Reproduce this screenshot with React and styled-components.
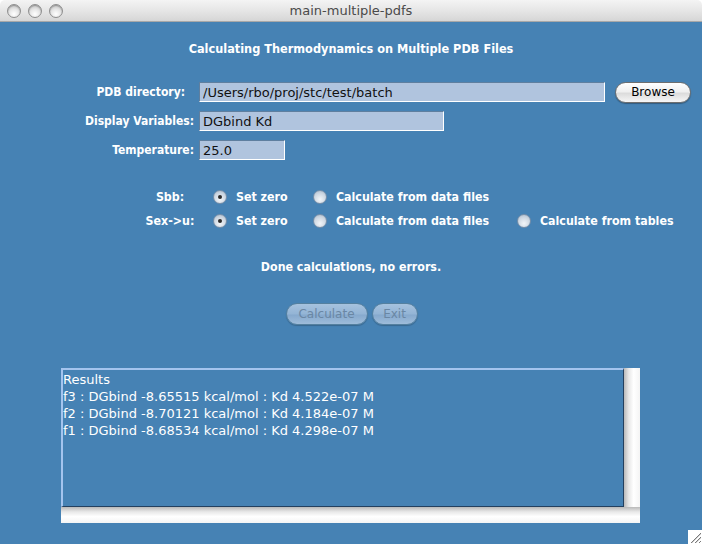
import styled, { createGlobalStyle } from "styled-components";

const GlobalStyle = createGlobalStyle`
  html, body {
    margin: 0;
    padding: 0;
    background: #ffffff;
  }
  * {
    box-sizing: border-box;
  }
`;

const FONT = `"DejaVu Sans", "Lucida Grande", Verdana, sans-serif`;
const BOLD_FONT = `"DejaVu Sans Condensed", "DejaVu Sans", Verdana, sans-serif`;

const App = () => {
  return (
    <Window>
      <GlobalStyle />
      <TitleBar>
        <Lights>
          <Light />
          <Light />
          <Light />
        </Lights>
        <TitleText>main-multiple-pdfs</TitleText>
      </TitleBar>
      <Content>
        <Heading>Calculating Thermodynamics on Multiple PDB Files</Heading>

        <Form>
          <FormRow>
            <Label pad={9}>PDB directory:</Label>
            <Field width={406} defaultValue="/Users/rbo/proj/stc/test/batch" />
            <AquaButton>Browse</AquaButton>
          </FormRow>
          <FormRow>
            <Label>Display Variables:</Label>
            <Field width={245} defaultValue="DGbind Kd" />
          </FormRow>
          <FormRow>
            <Label>Temperature:</Label>
            <Field width={86} defaultValue="25.0" />
          </FormRow>
        </Form>

        <Radios>
          <RadioRow>
            <RadioLabel>Sbb:</RadioLabel>
            <Option>
              <Radio checked />
              <span>Set zero</span>
            </Option>
            <Option>
              <Radio />
              <span>Calculate from data files</span>
            </Option>
          </RadioRow>
          <RadioRow>
            <RadioLabel>Sex-&gt;u:</RadioLabel>
            <Option>
              <Radio checked />
              <span>Set zero</span>
            </Option>
            <Option>
              <Radio />
              <span>Calculate from data files</span>
            </Option>
            <Option>
              <Radio />
              <span>Calculate from tables</span>
            </Option>
          </RadioRow>
        </Radios>

        <Status>Done calculations, no errors.</Status>

        <Buttons>
          <DisabledButton width={82}>Calculate</DisabledButton>
          <DisabledButton width={46}>Exit</DisabledButton>
        </Buttons>

        <ResultsBox>
          <ResultsText>
            <div>Results</div>
            <div>f3 : DGbind -8.65515 kcal/mol : Kd 4.522e-07 M</div>
            <div>f2 : DGbind -8.70121 kcal/mol : Kd 4.184e-07 M</div>
            <div>f1 : DGbind -8.68534 kcal/mol : Kd 4.298e-07 M</div>
          </ResultsText>
          <VScroll />
          <HScroll />
        </ResultsBox>

        <Grip>
          <svg width="14" height="14" viewBox="0 0 14 14">
            <rect width="14" height="14" fill="#ffffff" />
            <path d="M3 13 L13 3 M7 13 L13 7 M11 13 L13 11" stroke="#7a7a7a" strokeWidth="1" />
            <path d="M4 13 L13 4 M8 13 L13 8" stroke="#d0d0d0" strokeWidth="1" />
          </svg>
        </Grip>
      </Content>
    </Window>
  );
};

const Window = styled.div`
  width: 702px;
  height: 544px;
  display: flex;
  flex-direction: column;
  font-family: ${FONT};
  overflow: hidden;
`;

const TitleBar = styled.div`
  height: 22px;
  flex: none;
  display: flex;
  align-items: center;
  position: relative;
  background: linear-gradient(#f4f4f4, #e6e6e6 50%, #d6d6d6);
  border-bottom: 1px solid #a8a8a8;
  border-radius: 5px 5px 0 0;
`;

const Lights = styled.div`
  display: flex;
  gap: 7px;
  padding-left: 7px;
`;

const Light = styled.div`
  width: 14px;
  height: 14px;
  border-radius: 50%;
  border: 1px solid #8e8e8e;
  background: radial-gradient(circle at 50% 75%, #ffffff 0%, #e6e6e6 45%, #b4b4b4 100%);
  box-shadow: inset 0 1px 1px rgba(0, 0, 0, 0.25);
`;

const TitleText = styled.div`
  position: absolute;
  left: 0;
  right: 0;
  text-align: center;
  font-size: 13px;
  color: #4a4a4a;
  pointer-events: none;
`;

const Content = styled.div`
  flex: 1;
  background: #4682b4;
  display: flex;
  flex-direction: column;
  color: #ffffff;
`;

const BoldText = styled.div`
  font-family: ${BOLD_FONT};
  font-size: 12.3px;
  font-weight: bold;
`;

const Heading = styled(BoldText)`
  margin-top: 19px;
  height: 15px;
  line-height: 15px;
  text-align: center;
  font-size: 12.6px;
`;

const Form = styled.div`
  margin-top: 26px;
  display: flex;
  flex-direction: column;
  gap: 9px;
`;

const FormRow = styled.div`
  display: flex;
  align-items: center;
  height: 20px;
`;

const Label = styled(BoldText)`
  width: 194px;
  padding-right: ${(p) => p.pad || 0}px;
  text-align: right;
  font-size: 12px;
`;

const Field = styled.input`
  width: ${(p) => p.width}px;
  height: 20px;
  margin: 0 0 0 5px;
  padding: 0 3px;
  background: #b0c4de;
  border: 1px solid;
  border-color: #5f7f9f #ffffff #ffffff #5f7f9f;
  font-family: ${FONT};
  font-size: 13px;
  color: #111111;
  outline: none;
`;

const AquaButton = styled.button`
  margin-left: 10px;
  width: 76px;
  height: 21px;
  border-radius: 11px;
  border: 1px solid #6e6e6e;
  background: linear-gradient(#ffffff, #f0f0f0 45%, #dcdcdc 55%, #f6f6f6);
  box-shadow: 0 1px 1px rgba(0, 0, 0, 0.3);
  font-family: ${FONT};
  font-size: 12px;
  color: #000000;
  padding: 0;
`;

const Radios = styled.div`
  margin-top: 25px;
  display: flex;
  flex-direction: column;
`;

const RadioRow = styled(BoldText)`
  display: grid;
  grid-template-columns: 213px 100px 204px auto;
  align-items: center;
  height: 24px;
`;

const RadioLabel = styled.div`
  width: 80px;
  margin-left: 130px;
  text-align: center;
`;

const Option = styled.div`
  display: flex;
  align-items: center;
  gap: 9px;
`;

const Radio = styled.div`
  width: 14px;
  height: 14px;
  flex: none;
  border-radius: 50%;
  border: 1px solid #7890aa;
  background: radial-gradient(circle at 50% 70%, #f2f5f8 0%, #d0d9e3 55%, #a9b9ca 100%);
  display: flex;
  align-items: center;
  justify-content: center;
  &::after {
    content: "";
    width: 4px;
    height: 4px;
    border-radius: 50%;
    background: #2b2b2b;
    display: ${(p) => (p.checked ? "block" : "none")};
  }
`;

const Status = styled(BoldText)`
  margin-top: 27px;
  height: 15px;
  line-height: 15px;
  text-align: center;
`;

const Buttons = styled.div`
  margin-top: 28px;
  display: flex;
  justify-content: center;
  gap: 4px;
  padding-left: 1px;
`;

const DisabledButton = styled.button`
  width: ${(p) => p.width}px;
  height: 22px;
  border-radius: 11px;
  border: 1px solid #55809f;
  background: linear-gradient(#a6c2de, #93b4d5 50%, #86a9cd 55%, #9ebcda);
  box-shadow: 0 1px 1px rgba(0, 0, 0, 0.2);
  font-family: ${FONT};
  font-size: 12px;
  color: #6a87a4;
  padding: 0;
`;

const ResultsBox = styled.div`
  margin-top: 43px;
  margin-left: 61px;
  width: 579px;
  height: 155px;
  display: grid;
  grid-template-columns: 1fr 16px;
  grid-template-rows: 1fr 16px;
`;

const ResultsText = styled.div`
  border-top: 2px solid #a4c4ee;
  border-left: 2px solid #a4c4ee;
  border-right: 1px solid #23405f;
  border-bottom: 1px solid #23405f;
  padding-top: 1px;
  font-size: 13px;
  line-height: 17px;
  color: #ffffff;
  white-space: nowrap;
`;

const VScroll = styled.div`
  background: linear-gradient(to right, #b9b9b9, #e8e8e8 30%, #ffffff 60%, #f4f4f4);
`;

const HScroll = styled.div`
  grid-column: 1 / span 2;
  background: linear-gradient(#b9b9b9, #e8e8e8 30%, #ffffff 60%, #f4f4f4);
`;

const Grip = styled.div`
  margin-top: 7px;
  align-self: flex-end;
  width: 14px;
  height: 14px;
  display: flex;
`;

export default App;
